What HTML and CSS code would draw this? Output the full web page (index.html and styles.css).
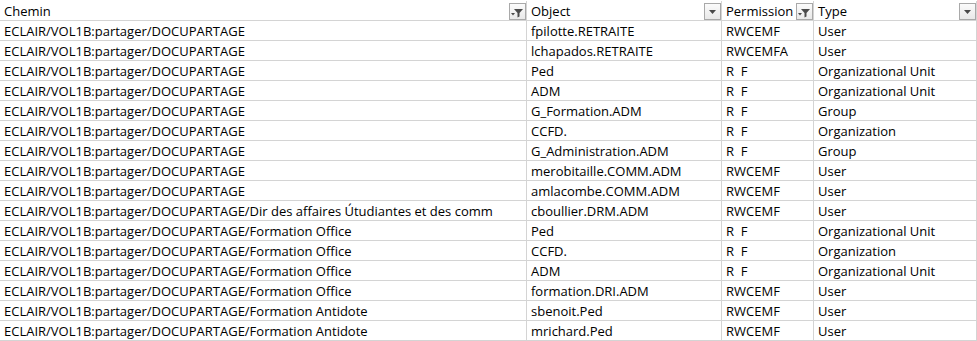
FILE: index.html
```html
<!DOCTYPE html>
<html lang="fr">
<head>
<meta charset="utf-8">
<title>Permissions</title>
<link rel="stylesheet" href="styles.css">
</head>
<body>
<div class="sheet">
  <div class="row head">
    <div class="cell c1"><span class="txt">Chemin</span><span class="fbtn"><svg width="15" height="15" viewBox="0 0 15 15"><path d="M4 5h9l-3.5 4v3.5l-2 1V9z" fill="#4a4a4a"/><path d="M1 9h4l-2 2.5z" fill="#4a4a4a"/></svg></span></div>
    <div class="cell c2"><span class="txt">Object</span><span class="fbtn"><svg width="15" height="15" viewBox="0 0 15 15"><path d="M4 6h7l-3.5 4z" fill="#4a4a4a"/></svg></span></div>
    <div class="cell c3"><span class="txt">Permission</span><span class="fbtn"><svg width="15" height="15" viewBox="0 0 15 15"><path d="M4 5h9l-3.5 4v3.5l-2 1V9z" fill="#4a4a4a"/><path d="M1 9h4l-2 2.5z" fill="#4a4a4a"/></svg></span></div>
    <div class="cell c4"><span class="txt">Type</span><span class="fbtn"><svg width="15" height="15" viewBox="0 0 15 15"><path d="M4 6h7l-3.5 4z" fill="#4a4a4a"/></svg></span></div>
  </div>
  <div class="row"><div class="cell c1">ECLAIR/VOL1B:partager/DOCUPARTAGE</div><div class="cell c2">fpilotte.RETRAITE</div><div class="cell c3">RWCEMF</div><div class="cell c4">User</div></div>
  <div class="row"><div class="cell c1">ECLAIR/VOL1B:partager/DOCUPARTAGE</div><div class="cell c2">lchapados.RETRAITE</div><div class="cell c3">RWCEMFA</div><div class="cell c4">User</div></div>
  <div class="row"><div class="cell c1">ECLAIR/VOL1B:partager/DOCUPARTAGE</div><div class="cell c2">Ped</div><div class="cell c3">R&nbsp;&nbsp;F</div><div class="cell c4">Organizational Unit</div></div>
  <div class="row"><div class="cell c1">ECLAIR/VOL1B:partager/DOCUPARTAGE</div><div class="cell c2">ADM</div><div class="cell c3">R&nbsp;&nbsp;F</div><div class="cell c4">Organizational Unit</div></div>
  <div class="row"><div class="cell c1">ECLAIR/VOL1B:partager/DOCUPARTAGE</div><div class="cell c2">G_Formation.ADM</div><div class="cell c3">R&nbsp;&nbsp;F</div><div class="cell c4">Group</div></div>
  <div class="row"><div class="cell c1">ECLAIR/VOL1B:partager/DOCUPARTAGE</div><div class="cell c2">CCFD.</div><div class="cell c3">R&nbsp;&nbsp;F</div><div class="cell c4">Organization</div></div>
  <div class="row"><div class="cell c1">ECLAIR/VOL1B:partager/DOCUPARTAGE</div><div class="cell c2">G_Administration.ADM</div><div class="cell c3">R&nbsp;&nbsp;F</div><div class="cell c4">Group</div></div>
  <div class="row"><div class="cell c1">ECLAIR/VOL1B:partager/DOCUPARTAGE</div><div class="cell c2">merobitaille.COMM.ADM</div><div class="cell c3">RWCEMF</div><div class="cell c4">User</div></div>
  <div class="row"><div class="cell c1">ECLAIR/VOL1B:partager/DOCUPARTAGE</div><div class="cell c2">amlacombe.COMM.ADM</div><div class="cell c3">RWCEMF</div><div class="cell c4">User</div></div>
  <div class="row"><div class="cell c1">ECLAIR/VOL1B:partager/DOCUPARTAGE/Dir des affaires Útudiantes et des comm</div><div class="cell c2">cboullier.DRM.ADM</div><div class="cell c3">RWCEMF</div><div class="cell c4">User</div></div>
  <div class="row"><div class="cell c1">ECLAIR/VOL1B:partager/DOCUPARTAGE/Formation Office</div><div class="cell c2">Ped</div><div class="cell c3">R&nbsp;&nbsp;F</div><div class="cell c4">Organizational Unit</div></div>
  <div class="row"><div class="cell c1">ECLAIR/VOL1B:partager/DOCUPARTAGE/Formation Office</div><div class="cell c2">CCFD.</div><div class="cell c3">R&nbsp;&nbsp;F</div><div class="cell c4">Organization</div></div>
  <div class="row"><div class="cell c1">ECLAIR/VOL1B:partager/DOCUPARTAGE/Formation Office</div><div class="cell c2">ADM</div><div class="cell c3">R&nbsp;&nbsp;F</div><div class="cell c4">Organizational Unit</div></div>
  <div class="row"><div class="cell c1">ECLAIR/VOL1B:partager/DOCUPARTAGE/Formation Office</div><div class="cell c2">formation.DRI.ADM</div><div class="cell c3">RWCEMF</div><div class="cell c4">User</div></div>
  <div class="row"><div class="cell c1">ECLAIR/VOL1B:partager/DOCUPARTAGE/Formation Antidote</div><div class="cell c2">sbenoit.Ped</div><div class="cell c3">RWCEMF</div><div class="cell c4">User</div></div>
  <div class="row"><div class="cell c1">ECLAIR/VOL1B:partager/DOCUPARTAGE/Formation Antidote</div><div class="cell c2">mrichard.Ped</div><div class="cell c3">RWCEMF</div><div class="cell c4">User</div></div>
</div>
</body>
</html>
```
FILE: styles.css
```css
html, body {
  margin: 0;
  padding: 0;
  background: #ffffff;
}
body {
  padding-top: 1px;
  font-family: "Open Sans", "Liberation Sans", sans-serif;
  font-size: 13px;
  font-variant-ligatures: none;
  color: #000000;
}
.sheet {
  display: flex;
  flex-direction: column;
  width: 977px;
}
.row {
  display: grid;
  grid-template-columns: 527px 195px 92px 163px;
  height: 20px;
}
.cell {
  box-sizing: border-box;
  height: 20px;
  border-right: 1px solid #d4d4d4;
  border-bottom: 1px solid #d4d4d4;
  padding: 1px 0 0 4px;
  line-height: 18px;
  white-space: nowrap;
  overflow: hidden;
}
.head .cell {
  display: flex;
  align-items: flex-start;
  padding-right: 0;
}
.head .txt {
  flex: 1;
}
.fbtn {
  box-sizing: border-box;
  width: 17px;
  height: 17px;
  margin-top: 1px;
  border: 1px solid #a9a9a9;
  background: linear-gradient(#fbfbfb, #e9e9e9);
  display: flex;
  align-items: center;
  justify-content: center;
}
.fbtn svg {
  display: block;
}
```
